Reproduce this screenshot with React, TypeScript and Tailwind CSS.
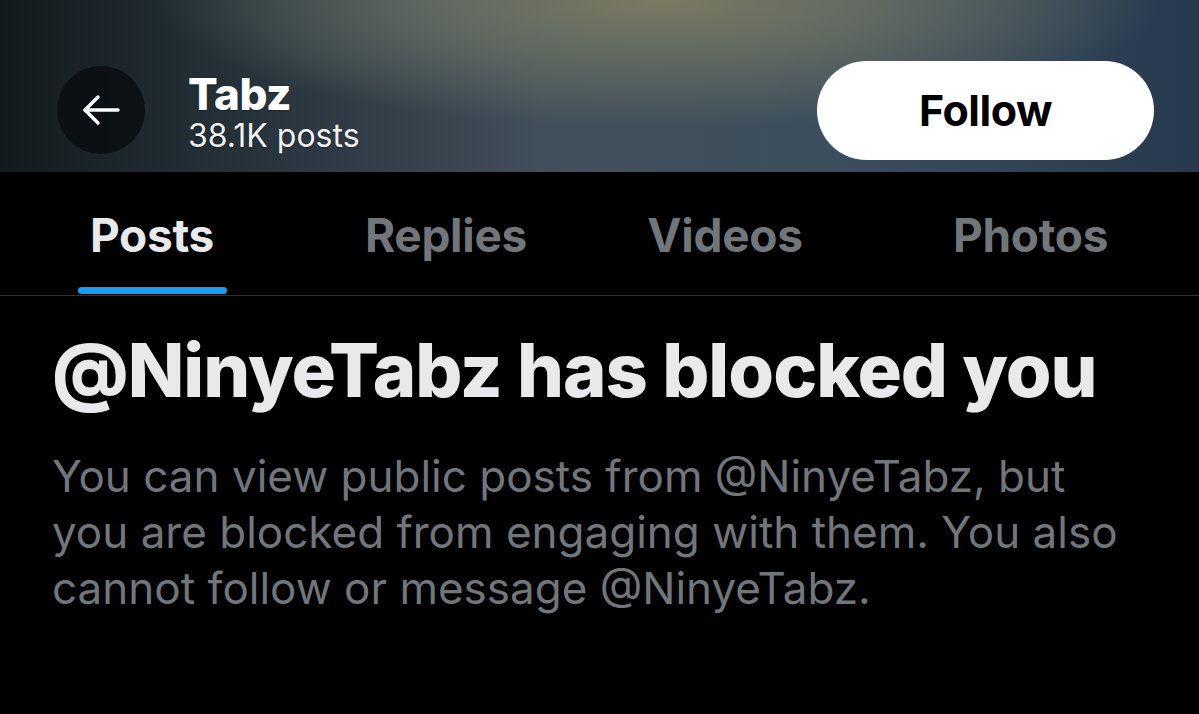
const tabs = [
  { label: 'Posts', active: true },
  { label: 'Replies', active: false },
  { label: 'Videos', active: false },
  { label: 'Photos', active: false },
]

function BackArrow() {
  return (
    <svg width="38" height="32" viewBox="0 0 38 32" fill="none" stroke="white" strokeWidth="3.4" strokeLinecap="round" strokeLinejoin="round">
      <path d="M3 16h33" />
      <path d="M16 3 3 16l13 13" />
    </svg>
  )
}

export default function App() {
  return (
    <div className="w-[1199px] h-[714px] overflow-hidden bg-black font-['Inter','Roboto',sans-serif] text-[#e7e9ea]">
      {/* blurred banner header */}
      <header className="h-[172px] flex items-center pl-[57px] pr-[45px] pt-[60px] pb-[12px] bg-[radial-gradient(ellipse_42%_75%_at_55%_0%,#7c7a62_0%,#636b62_40%,transparent_100%),linear-gradient(to_right,#131a1d_0%,#26323a_20%,#414f5a_45%,#3c4e5d_70%,#26394e_100%)]">
        <button className="w-[88px] h-[88px] rounded-full bg-[#0c1013]/95 flex items-center justify-center shrink-0">
          <BackArrow />
        </button>
        <div className="ml-[43px] mt-[3px] flex flex-col [text-shadow:0_1px_2px_rgba(0,0,0,0.35)]">
          <span className="text-[44px] leading-[48px] font-extrabold text-white tracking-[-0.5px]">Tabz</span>
          <span className="text-[32px] leading-[35px] text-white/95">38.1K posts</span>
        </div>
        <button className="ml-auto w-[337px] h-[99px] rounded-full bg-white text-black text-[43px] font-bold tracking-[-0.5px]">
          Follow
        </button>
      </header>

      {/* tabs */}
      <nav className="grid grid-cols-[304px_284px_274px_1fr] h-[124px] border-b border-[#2f3336]">
        {tabs.map(t => (
          <div key={t.label} className="flex flex-col items-center">
            <span
              className={
                'mt-[36px] text-[46px] leading-[54px] font-bold tracking-[-0.3px] ' +
                (t.active ? 'text-[#e7e9ea]' : 'text-[#71767b]')
              }
            >
              {t.label}
            </span>
            {t.active && <div className="mt-auto mb-[1px] w-[149px] h-[7px] rounded-full bg-[#1d9bf0]" />}
          </div>
        ))}
      </nav>

      {/* blocked notice */}
      <main className="pl-[52px] pr-[30px] pt-[32px]">
        <h1 className="text-[74px] leading-[84px] font-extrabold tracking-[-1px] text-[#e7e9ea] whitespace-nowrap">
          @NinyeTabz has blocked you
        </h1>
        <p className="mt-[36px] text-[44px] leading-[56px] text-[#71767b] whitespace-nowrap">
          You can view public posts from @NinyeTabz, but
          <br />
          you are blocked from engaging with them. You also
          <br />
          cannot follow or message @NinyeTabz.
        </p>
      </main>
    </div>
  )
}
